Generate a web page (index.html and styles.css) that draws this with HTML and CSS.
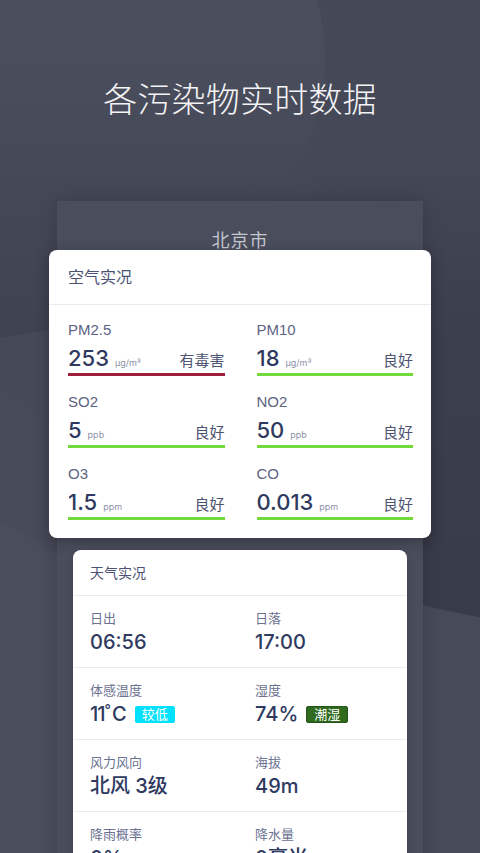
FILE: index.html
```html
<!DOCTYPE html>
<html lang="zh-CN">
  <head>
    <meta charset="UTF-8" />
    <meta name="viewport" content="width=device-width, initial-scale=1.0" />
    <title>各污染物实时数据</title>
    <link rel="stylesheet" href="styles.css">
  </head>
  <body>
    <div class="page">
      <div class="blob blob-right"></div>
      <div class="blob blob-top"></div>
      <div class="blob blob-low"></div>

      <div class="content">
        <h1 class="title">各污染物实时数据</h1>

        <div class="city-card">
          <div class="city">北京市</div>

          <div class="card air-card">
            <div class="card-head">空气实况</div>
            <div class="air-grid">
              <div class="air-item">
                <div class="air-label">PM2.5</div>
                <div class="air-value">
                  <span class="num">253</span><span class="unit">μg/m³</span>
                  <span class="level">有毒害</span>
                </div>
                <div class="bar bar-bad"></div>
              </div>
              <div class="air-item">
                <div class="air-label">PM10</div>
                <div class="air-value">
                  <span class="num">18</span><span class="unit">μg/m³</span>
                  <span class="level">良好</span>
                </div>
                <div class="bar"></div>
              </div>
              <div class="air-item">
                <div class="air-label">SO2</div>
                <div class="air-value">
                  <span class="num">5</span><span class="unit">ppb</span>
                  <span class="level">良好</span>
                </div>
                <div class="bar"></div>
              </div>
              <div class="air-item">
                <div class="air-label">NO2</div>
                <div class="air-value">
                  <span class="num">50</span><span class="unit">ppb</span>
                  <span class="level">良好</span>
                </div>
                <div class="bar"></div>
              </div>
              <div class="air-item">
                <div class="air-label">O3</div>
                <div class="air-value">
                  <span class="num">1.5</span><span class="unit">ppm</span>
                  <span class="level">良好</span>
                </div>
                <div class="bar"></div>
              </div>
              <div class="air-item">
                <div class="air-label">CO</div>
                <div class="air-value">
                  <span class="num">0.013</span><span class="unit">ppm</span>
                  <span class="level">良好</span>
                </div>
                <div class="bar"></div>
              </div>
            </div>
          </div>

          <div class="card weather-card">
            <div class="card-head">天气实况</div>
            <div class="weather-row">
              <div class="weather-item">
                <div class="w-label">日出</div>
                <div class="w-value">06:56</div>
              </div>
              <div class="weather-item">
                <div class="w-label">日落</div>
                <div class="w-value">17:00</div>
              </div>
            </div>
            <div class="weather-row">
              <div class="weather-item">
                <div class="w-label">体感温度</div>
                <div class="w-value"><span class="tight">11</span><span class="deg">°</span>C<span class="tag tag-cold">较低</span></div>
              </div>
              <div class="weather-item">
                <div class="w-label">湿度</div>
                <div class="w-value">74%<span class="tag tag-wet">潮湿</span></div>
              </div>
            </div>
            <div class="weather-row">
              <div class="weather-item">
                <div class="w-label">风力风向</div>
                <div class="w-value">北风 3级</div>
              </div>
              <div class="weather-item">
                <div class="w-label">海拔</div>
                <div class="w-value">49m</div>
              </div>
            </div>
            <div class="weather-row">
              <div class="weather-item">
                <div class="w-label">降雨概率</div>
                <div class="w-value">0%</div>
              </div>
              <div class="weather-item">
                <div class="w-label">降水量</div>
                <div class="w-value">0毫米</div>
              </div>
            </div>
          </div>
        </div>
      </div>
    </div>
  </body>
</html>
```

FILE: styles.css
```css
body {
  margin: 0;
  background-color: #464957;
  font-family: Inter, "Noto Sans CJK SC", sans-serif;
}
.page {
  position: relative;
  height: 100vh;
  overflow: hidden;
  background-color: #474a59;
}
.blob {
  position: absolute;
  border-radius: 50%;
}
.blob-top {
  left: -445px;
  top: -225px;
  width: 770px;
  height: 566px;
  background: linear-gradient(to bottom, #4b4e5d 45%, #3f4250 100%);
}
.blob-right {
  left: -338px;
  top: -1366px;
  width: 2000px;
  height: 2000px;
  background:
    linear-gradient(to right, #464957 19%, rgba(70, 73, 87, 0) 36%),
    linear-gradient(to bottom, #454856 76%, #3c3f4d 84%, #383b49 100%);
}
.blob-low {
  left: -670px;
  top: 477px;
  width: 940px;
  height: 940px;
  background-color: #4a4d5c;
}
.content {
  position: relative;
  z-index: 1;
}
.title {
  margin: 0;
  padding-top: 80px;
  font-size: 34px;
  line-height: 40px;
  font-weight: 300;
  color: #f4f4f6;
  text-align: center;
  letter-spacing: 0.2px;
}
.city-card {
  margin: 81px 57px 0;
  padding-top: 28px;
  height: 700px;
  background-color: #4a4d5c;
  box-shadow: 0 0 18px rgba(0, 0, 0, 0.18);
}
.city {
  font-size: 18px;
  line-height: 24px;
  color: #c6c8d0;
  text-align: center;
  letter-spacing: 1px;
}
.card {
  position: relative;
  background-color: #fff;
  border-radius: 8px;
}
.card-head {
  color: #4b5274;
  border-bottom: 1px solid #ebebef;
}
.air-card {
  margin: -3px -8px 0;
  box-shadow: 0 4px 14px rgba(0, 0, 0, 0.25);
}
.air-card .card-head {
  padding: 0 19px;
  font-size: 16px;
  line-height: 54px;
}
.air-grid {
  display: grid;
  grid-template-columns: 1fr 1fr;
  column-gap: 32px;
  row-gap: 16px;
  padding: 15px 18px 18px 19px;
}
.air-label {
  font-family: "Liberation Sans", "Noto Sans CJK SC", sans-serif;
  font-size: 15px;
  line-height: 20px;
  color: #5d6383;
}
.air-value {
  display: flex;
  align-items: baseline;
  box-sizing: border-box;
  height: 28px;
  margin-top: 4px;
  padding-top: 3px;
  line-height: 1;
}
.num {
  font-size: 22px;
  font-weight: 500;
  color: #2f3a60;
}
.unit {
  margin-left: 6px;
  font-size: 9px;
  color: #8d92a8;
}
.level {
  margin-left: auto;
  font-size: 15px;
  color: #4d5372;
}
.bar {
  height: 3px;
  margin-top: 1px;
  background-color: #72d83b;
}
.bar-bad {
  background-color: #9f1d3d;
}
.weather-card {
  margin: 12px 16px 0;
  box-shadow: 0 2px 8px rgba(0, 0, 0, 0.15);
}
.weather-card .card-head {
  padding: 0 17px;
  font-size: 14px;
  line-height: 45px;
}
.weather-row {
  display: grid;
  grid-template-columns: 165px 1fr;
  padding: 13px 17px 12px;
  border-bottom: 1px solid #ebebef;
}
.w-label {
  font-size: 13px;
  line-height: 18px;
  color: #6b7191;
}
.w-value {
  display: flex;
  align-items: center;
  height: 26px;
  margin-top: 2px;
  font-size: 20px;
  line-height: 26px;
  font-weight: 500;
  color: #2f3a5f;
  white-space: pre;
}
.tight {
  letter-spacing: -1px;
}
.deg {
  font-size: 14px;
  align-self: flex-start;
  line-height: 18px;
  margin: 0 1px 0 0;
}
.tag {
  margin-left: 8px;
  padding: 0 7px;
  font-size: 13px;
  line-height: 17px;
  font-weight: 400;
  color: #fff;
  border-radius: 2px;
}
.tag-cold {
  background-color: #00e1fd;
}
.tag-wet {
  background-color: #2f6a1f;
  border: 1px solid #24541a;
  line-height: 15px;
}
```
